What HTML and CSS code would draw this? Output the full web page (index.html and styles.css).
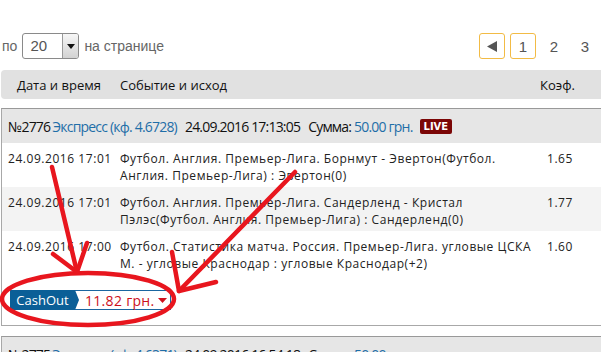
FILE: index.html
```html
<!DOCTYPE html>
<html lang="ru">
<head>
<meta charset="utf-8">
<title>История ставок</title>
<link rel="stylesheet" href="styles.css">
</head>
<body>
<div class="page">
  <div class="toolbar">
    <div class="perpage">
      <span class="lbl">по</span>
      <div class="select">
        <span class="select-val">20</span>
        <span class="select-btn"><svg width="8" height="5" viewBox="0 0 8 5"><path d="M0 0H8L4 5Z" fill="#111"/></svg></span>
      </div>
      <span class="lbl">на странице</span>
    </div>
    <nav class="pager">
      <a class="pg pg-box"><svg width="10" height="11" viewBox="0 0 10 11"><path d="M0 5.5L10 0V11Z" fill="#555"/></svg></a>
      <a class="pg pg-box">1</a>
      <a class="pg">2</a>
      <a class="pg">3</a>
    </nav>
  </div>

  <div class="thead">
    <span>Дата и время</span>
    <span>Событие и исход</span>
    <span>Коэф.</span>
  </div>

  <div class="bet">
    <div class="bet-head">
      <span class="num">№2776</span>
      <span class="link">Экспресс (кф. 4.6728)</span>
      <span class="dt">24.09.2016 17:13:05</span>
      <span class="sum">Сумма: <span class="link">50.00 грн.</span></span>
      <span class="live">LIVE</span>
    </div>
    <div class="row">
      <span class="r-date">24.09.2016 17:01</span>
      <span class="r-event">Футбол. Англия. Премьер-Лига. Борнмут - Эвертон(Футбол.<br>Англия. Премьер-Лига) : Эвертон(0)</span>
      <span class="r-coef">1.65</span>
    </div>
    <div class="row row-alt">
      <span class="r-date">24.09.2016 17:01</span>
      <span class="r-event">Футбол. Англия. Премьер-Лига. Сандерленд - Кристал<br>Пэлэс(Футбол. Англия. Премьер-Лига) : Сандерленд(0)</span>
      <span class="r-coef">1.77</span>
    </div>
    <div class="row">
      <span class="r-date">24.09.2016 17:00</span>
      <span class="r-event">Футбол. Статистика матча. Россия. Премьер-Лига. угловые ЦСКА<br>М. - угловые Краснодар : угловые Краснодар(+2)</span>
      <span class="r-coef">1.60</span>
    </div>
    <div class="cashout">
      <span class="co-label">CashOut</span>
      <span class="co-value">11.82 грн.<svg width="9" height="5" viewBox="0 0 9 5"><path d="M0 0H9L4.5 5Z" fill="#d0101c"/></svg></span>
    </div>
  </div>

  <div class="bet bet-next">
    <div class="bet-head">
      <span class="num">№2775</span>
      <span class="link">Экспресс (кф. 4.6371)</span>
      <span class="dt">24.09.2016 16:54:18</span>
      <span class="sum">Сумма: <span class="link">50.00 грн.</span></span>
    </div>
  </div>

  <svg class="marks" width="601" height="352" viewBox="0 0 601 352">
    <g fill="none" stroke="#e8161e" stroke-width="4.5" stroke-linecap="round" stroke-linejoin="round">
      <ellipse cx="88" cy="299" rx="86" ry="26"/>
      <path d="M52 167L77 272"/>
      <path d="M53 254L77 272L87 243"/>
      <path d="M295 172L179 291"/>
      <path d="M172 252L179 291L216 282"/>
    </g>
  </svg>
</div>
</body>
</html>
```

FILE: styles.css
```css
html, body {
  margin: 0;
  padding: 0;
  background: #fff;
  overflow: hidden;
}

body {
  font-family: "Open Sans", "Liberation Sans", sans-serif;
  color: #222;
}

.page {
  position: relative;
  width: 612px;
  height: 352px;
}

.toolbar {
  display: flex;
  justify-content: space-between;
  align-items: center;
  padding: 33px 14px 0 2px;
  height: 26px;
}

.perpage {
  display: flex;
  align-items: center;
  gap: 5px;
}

.lbl {
  font-family: "Liberation Sans", sans-serif;
  font-size: 14px;
  color: #666;
}

.select {
  display: flex;
  width: 55px;
  height: 24px;
  border: 1px solid #8a8a8a;
  border-radius: 3px;
  box-sizing: content-box;
  overflow: hidden;
}

.select-val {
  flex: 1;
  font-family: "Liberation Sans", sans-serif;
  font-size: 15px;
  color: #555;
  line-height: 24px;
  padding-left: 7px;
}

.select-btn {
  width: 15px;
  display: flex;
  align-items: center;
  justify-content: center;
  border-left: 1px solid #9a9a9a;
  background: linear-gradient(#f6f6f6, #d2d2d2);
}

.pager {
  display: flex;
  gap: 5px;
}

.pg {
  width: 26px;
  height: 26px;
  box-sizing: border-box;
  display: flex;
  align-items: center;
  justify-content: center;
  font-family: "Liberation Sans", sans-serif;
  font-size: 15px;
  color: #555;
}

.pg-box {
  border: 1px solid #f2bb45;
  border-radius: 3px;
}

.thead {
  display: grid;
  grid-template-columns: 103px 420px 1fr;
  align-items: center;
  margin: 11px 0 0 1px;
  height: 29px;
  padding-left: 16px;
  background: #e1e1e1;
  border-radius: 4px;
  font-size: 13px;
  color: #111;
}

.bet {
  margin: 9px 0 0 1px;
  border: 1px solid #a8a8a8;
  border-top-color: #999;
  padding-bottom: 15px;
}

.bet-head {
  display: flex;
  align-items: center;
  height: 34px;
  padding: 0 0 0 6px;
  background: #e6e6e6;
  font-family: "Open Sans", sans-serif;
  font-size: 14px;
  letter-spacing: -0.8px;
  color: #111;
}

.bet-head .num {
  margin-right: 2px;
}

.bet-head .dt {
  margin-left: 8px;
}

.bet-head .sum {
  margin-left: 8px;
}

.link {
  color: #1f6ea8;
}

.live {
  margin-left: 7px;
  padding: 1px 4px;
  background: #7b0606;
  color: #fff;
  border-radius: 2px;
  font-family: "DejaVu Sans", sans-serif;
  font-weight: bold;
  font-size: 10px;
  line-height: 13px;
  letter-spacing: 0;
}

.row {
  display: grid;
  grid-template-columns: 112px 427px 1fr;
  padding: 7px 0 3px 6px;
  font-size: 12px;
  line-height: 17px;
  letter-spacing: 0.55px;
  color: #222;
}

.row-alt {
  background: #f3f3f3;
}

.cashout {
  display: flex;
  margin: 15px 0 0 8px;
  height: 20px;
  width: max-content;
}

.co-label {
  position: relative;
  display: flex;
  align-items: center;
  justify-content: center;
  width: 65px;
  background: #0b5f97;
  color: #fff;
  font-size: 13px;
}

.co-label::after {
  content: "";
  position: absolute;
  right: -4px;
  top: 0;
  border-style: solid;
  border-width: 10px 0 10px 4px;
  border-color: transparent transparent transparent #0b5f97;
}

.co-value {
  display: flex;
  align-items: center;
  gap: 4px;
  padding: 0 3px 0 10px;
  border: 1px solid #1a66a0;
  border-left: none;
  color: #cc0f1a;
  font-size: 14px;
  letter-spacing: 0.3px;
  white-space: nowrap;
}

.bet-next {
  margin-top: 10px;
}

.marks {
  position: absolute;
  left: 0;
  top: 0;
  pointer-events: none;
}
```
